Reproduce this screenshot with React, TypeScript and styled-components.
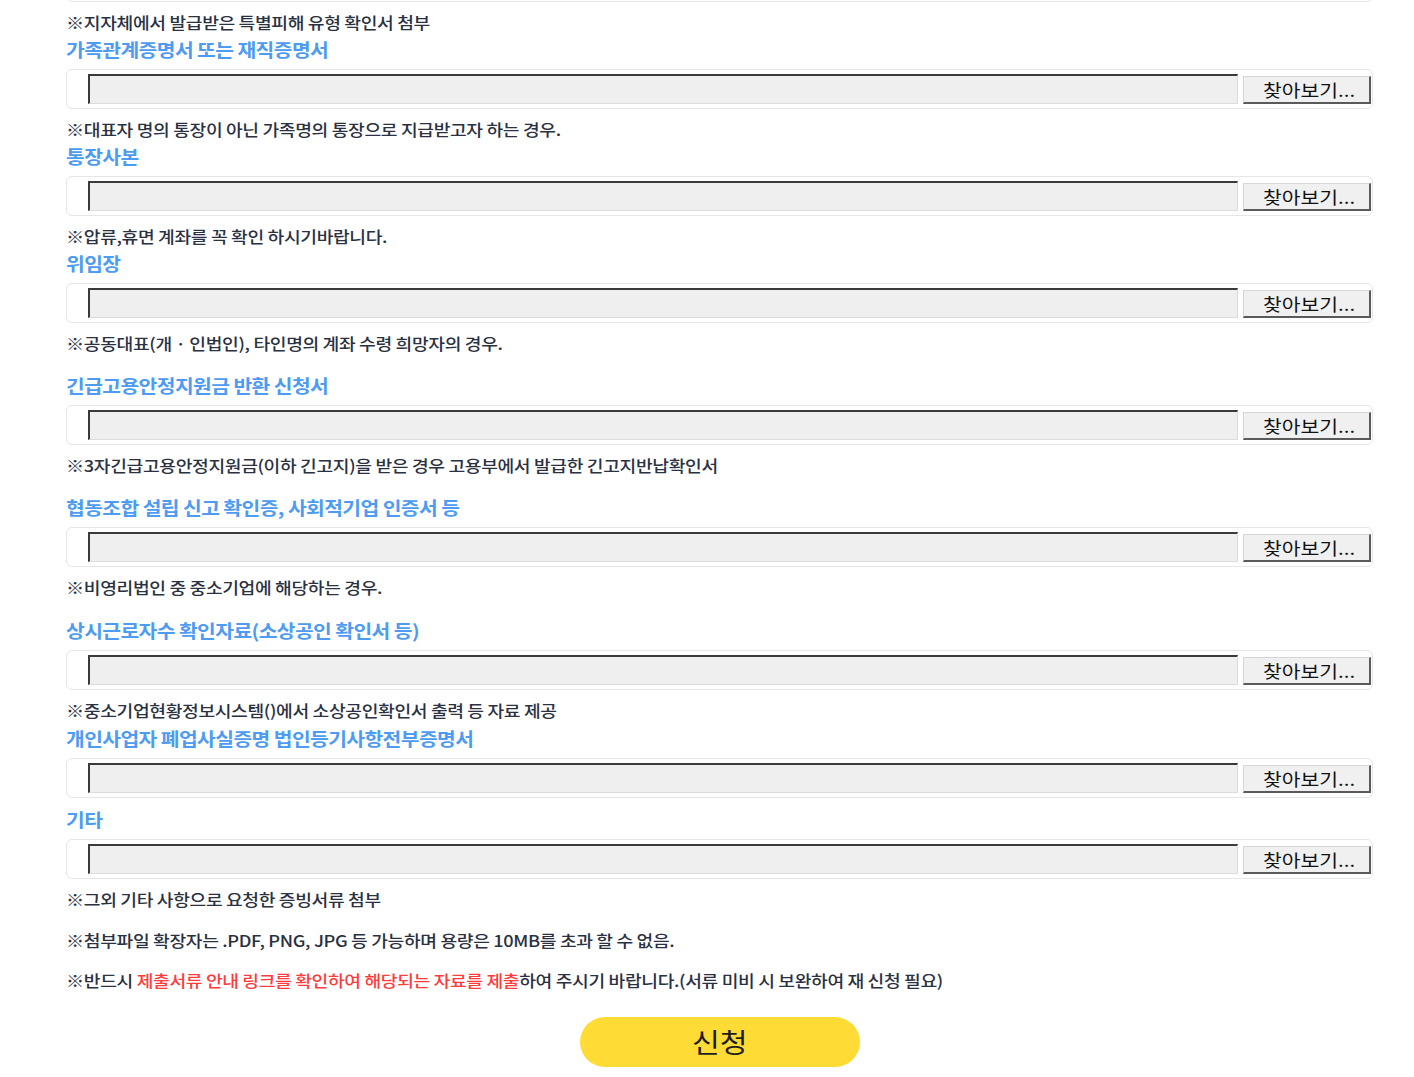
import React from "react";
import styled, { createGlobalStyle } from "styled-components";

const Global = createGlobalStyle`
  html, body { margin: 0; padding: 0; background: #ffffff; overflow-x: hidden; }
  body { font-family: "Noto Sans CJK KR", "Noto Sans", sans-serif; }
`;

const Page = styled.div`
  width: 1307px;
  margin-left: 66px;
  margin-top: -38px;
  display: flex;
  flex-direction: column;
`;

const Note = styled.p<{ $top?: number }>`
  align-self: flex-start;
  margin: ${(p) => p.$top ?? 8}px 0 0 0;
  font-size: 16px;
  line-height: 24px;
  font-weight: 500;
  color: #2a3142;
  letter-spacing: -0.3px;
  white-space: nowrap;
  transform: scaleX(1.135);
  transform-origin: left center;
`;

const Red = styled.span`
  color: #ff3c3c;
`;

const Label = styled.h3<{ $top?: number }>`
  align-self: flex-start;
  margin: ${(p) => p.$top ?? 3}px 0 8px 0;
  font-size: 18px;
  line-height: 24px;
  font-weight: 700;
  color: #4d9bf2;
  letter-spacing: -0.5px;
  white-space: nowrap;
  transform: scaleX(1.13);
  transform-origin: left center;
`;

const FileBox = styled.div`
  box-sizing: border-box;
  height: 40px;
  border: 1px solid #e6e6e6;
  border-radius: 6px;
  display: flex;
  align-items: flex-start;
  padding: 4px 1px 0 21px;
  gap: 5px;
  background: #fff;
`;

const PathInput = styled.div`
  box-sizing: border-box;
  flex: 1;
  height: 30px;
  background: #efefef;
  border-style: solid;
  border-width: 2px 1px 1px 2px;
  border-color: #3a3a3a #dcdcdc #dcdcdc #3a3a3a;
`;

const BrowseButton = styled.button`
  box-sizing: border-box;
  width: 128px;
  height: 28px;
  margin-top: 2px;
  background: #f0f0f0;
  border-style: solid;
  border-width: 1px 2px 2px 1px;
  border-color: #d6d6d6 #5a5a5a #5a5a5a #d6d6d6;
  font-family: "Noto Sans CJK KR", sans-serif;
  font-size: 17px;
  line-height: 22px;
  color: #111;
  padding: 0 0 0 19px;
  text-align: left;
`;

const BrowseText = styled.span`
  display: inline-block;
  transform: scaleX(1.2);
  transform-origin: left center;
`;

const SubmitRow = styled.div`
  display: flex;
  justify-content: center;
  margin-top: 25px;
`;

const Submit = styled.button`
  width: 280px;
  height: 50px;
  border: none;
  border-radius: 25px;
  background: #ffdb35;
  font-family: "Noto Sans CJK KR", sans-serif;
  font-size: 27px;
  line-height: 50px;
  color: #1d1d1d;
  font-weight: 400;
  padding: 0;
`;

const SubmitText = styled.span`
  display: inline-block;
  transform: scaleX(1.12);
`;

const Field = () => (
  <FileBox>
    <PathInput />
    <BrowseButton type="button">
      <BrowseText>찾아보기...</BrowseText>
    </BrowseButton>
  </FileBox>
);

type Section = { label: string; note?: string; top?: number };

const sections: Section[] = [
  { label: "가족관계증명서 또는 재직증명서", note: "※대표자 명의 통장이 아닌 가족명의 통장으로 지급받고자 하는 경우." },
  { label: "통장사본", note: "※압류,휴면 계좌를 꼭 확인 하시기바랍니다." },
  { label: "위임장", note: "※공동대표(개 · 인법인), 타인명의 계좌 수령 희망자의 경우." },
  { label: "긴급고용안정지원금 반환 신청서", note: "※3자긴급고용안정지원금(이하 긴고지)을 받은 경우 고용부에서 발급한 긴고지반납확인서", top: 18 },
  { label: "협동조합 설립 신고 확인증, 사회적기업 인증서 등", note: "※비영리법인 중 중소기업에 해당하는 경우.", top: 18 },
  { label: "상시근로자수 확인자료(소상공인 확인서 등)", note: "※중소기업현황정보시스템()에서 소상공인확인서 출력 등 자료 제공", top: 19 },
  { label: "개인사업자 폐업사실증명 법인등기사항전부증명서", top: 4 },
  { label: "기타", note: "※그외 기타 사항으로 요청한 증빙서류 첨부", top: 9 },
];

export default function App() {
  return (
    <>
      <Global />
      <Page>
        <FileBox />
        <Note>※지자체에서 발급받은 특별피해 유형 확인서 첨부</Note>
        {sections.map((s) => (
          <React.Fragment key={s.label}>
            <Label $top={s.top}>{s.label}</Label>
            <Field />
            {s.note && <Note>{s.note}</Note>}
          </React.Fragment>
        ))}
        <Note $top={17}>※첨부파일 확장자는 .PDF, PNG, JPG 등 가능하며 용량은 10MB를 초과 할 수 없음.</Note>
        <Note $top={16}>
          ※반드시 <Red>제출서류 안내 링크를 확인하여 해당되는 자료를 제출</Red>하여 주시기 바랍니다.(서류 미비 시 보완하여 재 신청 필요)
        </Note>
        <SubmitRow>
          <Submit type="button">
            <SubmitText>신청</SubmitText>
          </Submit>
        </SubmitRow>
      </Page>
    </>
  );
}
